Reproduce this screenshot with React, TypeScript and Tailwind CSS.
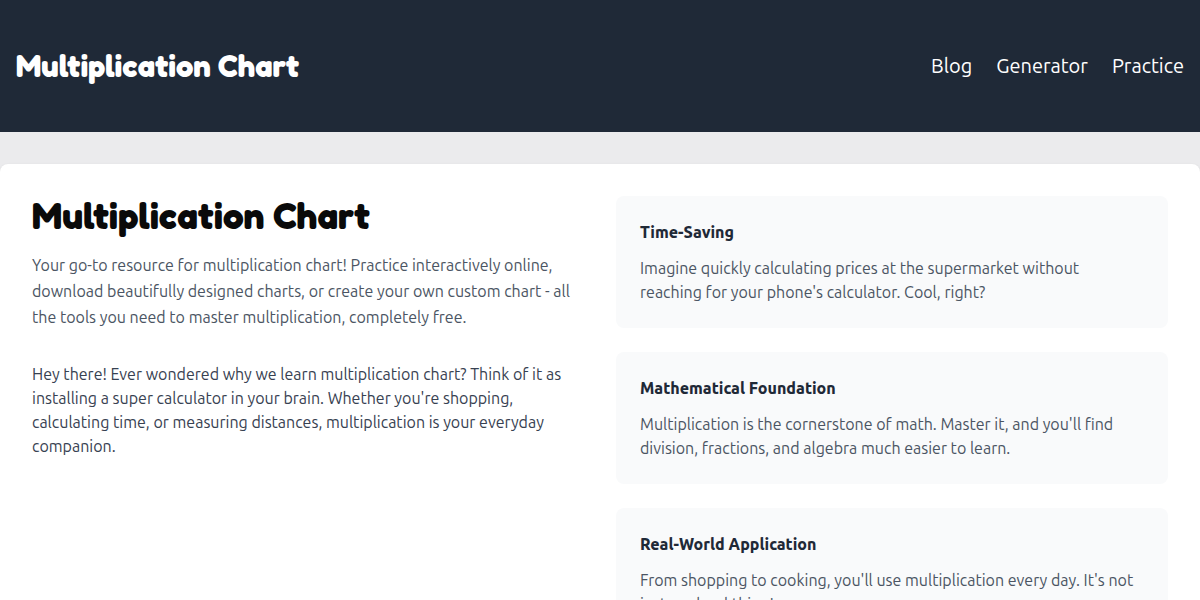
const navLinks = [
  { label: "Blog", href: "/blog" },
  { label: "Generator", href: "/generator" },
  { label: "Practice", href: "/practice" },
];

const reasons = [
  {
    title: "Time-Saving",
    description:
      "Imagine quickly calculating prices at the supermarket without reaching for your phone's calculator. Cool, right?",
  },
  {
    title: "Mathematical Foundation",
    description:
      "Multiplication is the cornerstone of math. Master it, and you'll find division, fractions, and algebra much easier to learn.",
  },
  {
    title: "Real-World Application",
    description:
      "From shopping to cooking, you'll use multiplication every day. It's not just a school thing!",
  },
];

function Header() {
  return (
    <header className="flex items-center justify-between bg-[#1f2937] px-4 py-12 text-white">
      <a
        href="/"
        className="font-[Fredoka,Lato,sans-serif] text-[31px] leading-9 font-bold"
      >
        Multiplication Chart
      </a>
      <nav className="flex gap-6 text-xl">
        {navLinks.map((link) => (
          <a key={link.href} href={link.href} className="hover:underline">
            {link.label}
          </a>
        ))}
      </nav>
    </header>
  );
}

function ReasonCard({ title, description }: (typeof reasons)[number]) {
  return (
    <article className="rounded-lg bg-[#f9fafb] p-6">
      <h2 className="mb-3 font-extrabold text-[#1f2937]">{title}</h2>
      <p className="text-[#4b5563]">{description}</p>
    </article>
  );
}

export default function App() {
  return (
    <div className="min-h-screen bg-[#ebebed] pb-8 font-[Ubuntu,'Noto_Sans',sans-serif]">
      <Header />
      <main className="mt-8 grid grid-cols-2 gap-8 rounded-lg bg-white p-8 shadow-sm">
        <section>
          <h1 className="mb-4 font-[Fredoka,Lato,sans-serif] text-[37px] leading-10 font-bold text-[#0a0a0a]">
            Multiplication Chart
          </h1>
          <p className="mb-8 leading-[26px] text-[#4b5563]">
            Your go-to resource for multiplication chart! Practice interactively
            online, download beautifully designed charts, or create your own
            custom chart - all the tools you need to master multiplication,
            completely free.
          </p>
          <p className="text-[#374151]">
            Hey there! Ever wondered why we learn multiplication chart? Think of
            it as installing a super calculator in your brain. Whether you're
            shopping, calculating time, or measuring distances, multiplication
            is your everyday companion.
          </p>
        </section>
        <section className="flex flex-col gap-6">
          {reasons.map((reason) => (
            <ReasonCard key={reason.title} {...reason} />
          ))}
        </section>
      </main>
    </div>
  );
}
